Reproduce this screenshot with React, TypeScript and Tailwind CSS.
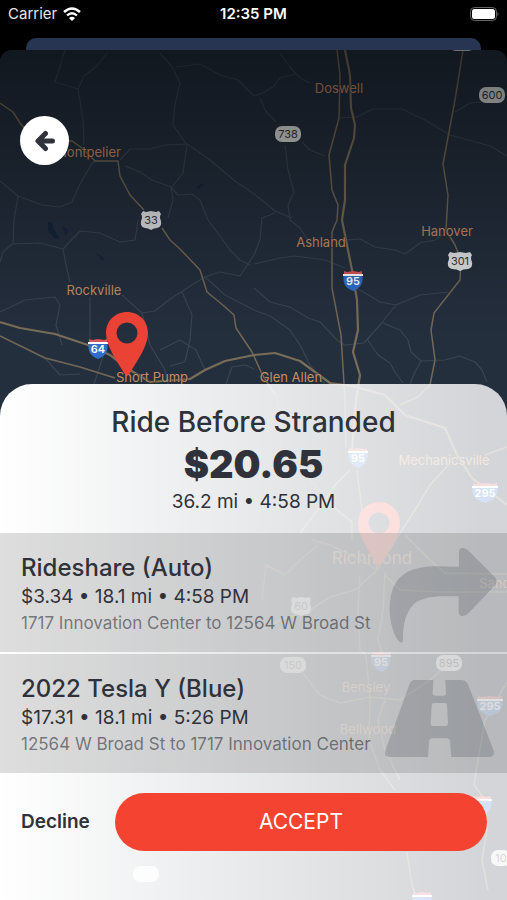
import React from "react";

const minorRoads = [
  "M65 50L55 82L78 89M107 53L97 66L84 76L78 89L83 120L84 145",
  "M160 53L172 67L180 83L175 105L173 125L187 145L183 173L171 188L173 200L168 218",
  "M176 67L200 64L220 75L238 80L254 96L263 93L274 86L280 78L295 74",
  "M0 181L18 196L42 205L60 207L72 202L80 184L92 163L97 161M18 196L14 220L13 244",
  "M120 160L130 149L150 149L165 145L187 144L210 160L235 181L254 194L275 211L292 218",
  "M125 166L140 172L152 180L171 187L178 195L192 194L200 200L208 220L217 232L230 250L240 260L250 265",
  "M280 53L290 67L300 78L310 83M285 145L288 170L294 192L288 205L290 220L300 228L308 240",
  "M302 142L310 150L325 156M260 98L265 110L276 122M262 218L275 213M262 218L260 240L254 255L240 276",
  "M340 118L357 117L373 109L402 109L425 120L450 135L490 146L507 156M455 112L470 103L482 102",
  "M254 264L280 258L295 256L325 260L345 268M345 240L360 239L375 247L395 250L405 254L420 243L435 240L447 232",
  "M254 288L270 302L290 307L308 318L320 322L338 341L345 345L364 343L380 325L396 305L380 302L370 296L355 287",
  "M396 305L420 295L448 292M383 323L400 330L408 340L411 352L421 361L445 360L460 356L475 362L482 370L487 382",
  "M367 339L378 355L390 363L395 372L403 383M421 361L415 372L410 384M254 310L270 316L290 330L300 345L310 365L325 384",
  "M0 262L3 252L12 244L40 243L63 249L80 231L100 233L120 242L135 240L138 220M63 249L66 265L70 282",
  "M0 312L25 300L55 297L60 305L56 325L62 345M90 297L90 345M105 350L98 372L92 390",
  "M122 295L142 313L155 311L170 299L195 283L205 277L220 272L240 276M205 277L225 295L254 310",
  "M142 313L150 345L165 370L168 384M182 292L192 315L190 340L185 362L170 366M160 350L180 340L196 350L205 370",
  "M45 358L60 375L80 374M226 384L232 367L245 365L254 369M277 395L282 450L310 480L330 500",
];

const highways = [
  "M0 103L13 112L20 123L34 140L72 141L82 148L95 161L118 161L120 176L130 195L144 210",
  "M162 228L170 240L181 250L200 270L207 292L224 306L234 315L236 328L252 352L262 374L275 395",
  "M337 50L340 75L339 118L329 155L332 190L338 205L337 220L332 232L332 288L341 335L345 400L346 448",
  "M463 50L455 100L443 164L448 195L446 230L455 245L461 260L460 280L434 313L431 330L435 360L430 385L418 397L400 405",
  "M0 336L45 358L80 367L115 378",
  "M357 470L362 510L377 568M350 470L335 485L325 500L352 522L352 540M325 500L300 533",
  "M450 463L430 485L415 510L400 533L377 570M485 455L507 447",
  "M312 540L330 545L365 562L377 570L355 590L330 597L310 610L280 620L262 630M262 600L266 565L285 575L300 560L318 545",
  "M360 575L358 610L360 650L366 655L370 700L369 740L380 770L395 790",
  "M385 572L383 610L378 640L382 652M385 575L400 590L440 592L507 592M405 535L430 560L445 573L507 574",
  "M303 673L320 695L340 703L370 697L400 700L430 680L445 667M385 700L378 720L385 750L400 780",
  "M507 682L485 720L478 760L474 785L485 800L487 830L482 860L488 890M407 852L411 880L416 900",
];

const interstates = [
  "M345 50L350 75L351 108L355 125L354 138L345 165L345 200L342 220L346 240L352 270L357 300L358 330L353 352L360 375L356 400L352 450",
  "M0 322L20 328L55 334L88 345L110 355L130 370L150 382L190 379L205 370L225 361L254 355L275 353L300 361L330 383L352 386L385 395L405 415L445 428L457 455L472 478L507 505",
];

const places = [
  { name: "Doswell", x: 339, y: 93, size: 13 },
  { name: "Montpelier", x: 88, y: 157, size: 13 },
  { name: "Hanover", x: 447, y: 236, size: 13 },
  { name: "Ashland", x: 321, y: 247, size: 13 },
  { name: "Rockville", x: 94, y: 295, size: 13 },
  { name: "Short Pump", x: 152, y: 382, size: 13 },
  { name: "Glen Allen", x: 291, y: 382, size: 13 },
  { name: "Mechanicsville", x: 444, y: 465, size: 13 },
  { name: "Richmond", x: 372, y: 564, size: 17 },
  { name: "Sandston", x: 508, y: 588, size: 13 },
  { name: "Bensley", x: 366, y: 692, size: 13 },
  { name: "Bellwood", x: 368, y: 734, size: 13 },
];

const routes = [
  { kind: "state", label: "", x: 462, y: 43 },
  { kind: "state", label: "600", x: 492, y: 95 },
  { kind: "state", label: "738", x: 288, y: 134 },
  { kind: "us", label: "33", x: 151, y: 220 },
  { kind: "us", label: "301", x: 460, y: 261 },
  { kind: "interstate", label: "95", x: 353, y: 280 },
  { kind: "interstate", label: "64", x: 98, y: 348 },
  { kind: "interstate", label: "95", x: 358, y: 457 },
  { kind: "interstate", label: "295", x: 485, y: 492 },
  { kind: "us", label: "60", x: 301, y: 606 },
  { kind: "state", label: "150", x: 293, y: 665 },
  { kind: "interstate", label: "95", x: 381, y: 661 },
  { kind: "state", label: "895", x: 449, y: 663 },
  { kind: "interstate", label: "295", x: 490, y: 705 },
  { kind: "interstate", label: "", x: 482, y: 805 },
  { kind: "state", label: "10", x: 501, y: 858 },
  { kind: "state", label: "", x: 146, y: 874 },
  { kind: "interstate", label: "", x: 422, y: 901 },
];

const rides = [
  {
    title: "Rideshare (Auto)",
    details: "$3.34 • 18.1 mi • 4:58 PM",
    route: "1717 Innovation Center to 12564 W Broad St",
    icon: <TurnIcon />,
  },
  {
    title: "2022 Tesla Y (Blue)",
    details: "$17.31 • 18.1 mi • 5:26 PM",
    route: "12564 W Broad St to 1717 Innovation Center",
    icon: <RoadIcon />,
  },
];

function RouteShield({ kind, label, x, y }: any) {
  const wide = label.length > 2;
  const textProps = {
    textAnchor: "middle" as const,
    y: 4,
    fontSize: 11,
    fill: "#33363b",
  };

  if (kind === "interstate") {
    const w = wide ? 12 : 9;
    return (
      <g transform={`translate(${x} ${y})`}>
        <path
          d={`M${-w} -6C${-w - 2} 2 ${-w + 1} 8 0 11C${w - 1} 8 ${w + 2} 2 ${w} -6Z`}
          fill="#2f6fc9"
        />
        <path d={`M${-w} -4V-9L${-w + 3} -8L0 -9L${w - 3} -8L${w} -9V-4Z`} fill="#d9545a" />
        <path d={`M${-w - 1} -6H${w + 1}V-4H${-w - 1}Z`} fill="#fff" />
        <text {...textProps} y={5} fill="#fff" fontWeight={600}>
          {label}
        </text>
      </g>
    );
  }

  if (kind === "us") {
    const w = wide ? 12 : 10;
    return (
      <g transform={`translate(${x} ${y})`}>
        <path
          d={`M${-w + 2} -9L${-w / 2} -8L0 -9L${w / 2} -8L${w - 2} -9L${w} -6Q${w - 2} -3 ${w} 1Q${w + 1} 7 ${w - 4} 8Q3 8 0 10Q-3 8 ${-w + 4} 8Q${-w - 1} 7 ${-w} 1Q${-w + 2} -3 ${-w} -6Z`}
          fill="#e4e5e6"
        />
        <text {...textProps}>{label}</text>
      </g>
    );
  }

  const half = label.length === 2 ? 10 : 13;
  return (
    <g transform={`translate(${x} ${y})`}>
      <rect x={-half} y={-8} width={half * 2} height={16} rx={7} fill="#dcdddd" />
      <text {...textProps}>{label}</text>
    </g>
  );
}

function MapPin({ x, y }: any) {
  return (
    <path
      transform={`translate(${x} ${y})`}
      d="M0 -21C12 -21 21 -12 21 0C21 13 10 28 3 40Q0 45 -3 40C-10 28 -21 13 -21 0C-21 -12 -12 -21 0 -21ZM0 -10.5A10.5 10.5 0 1 0 0 10.5A10.5 10.5 0 1 0 0 -10.5Z"
      fill="#ea4335"
      fillRule="evenodd"
    />
  );
}

function RouteMap() {
  return (
    <svg
      className="absolute inset-0 h-full w-full bg-[#242f3e]"
      viewBox="0 50 507 850"
      preserveAspectRatio="xMidYMid slice"
      fontFamily="Inter, sans-serif"
      role="img"
      aria-label="Route map"
    >
      <defs>
        <linearGradient id="shade" x1="0" y1="0" x2="0" y2="1">
          <stop offset="0" stopColor="#000" stopOpacity="0.5" />
          <stop offset="1" stopColor="#000" stopOpacity="0" />
        </linearGradient>
      </defs>
      <path
        d="M48 222l4 0 2 8 6 8 -5 1 -7-8zM96 253l8 5 -2 3zM62 226l6 4 -2 6zM196 188l7-5 1 2 -7 4z"
        fill="#17263c"
      />
      <g fill="none" strokeLinejoin="round">
        <path d={minorRoads.join("")} stroke="#3a4552" strokeWidth="1.2" />
        <path d={highways.join("")} stroke="#746855" strokeWidth="1.5" />
        <path d={interstates.join("")} stroke="#7a6d57" strokeWidth="2.2" />
      </g>
      {places.map((p) => (
        <text
          key={p.name}
          x={p.x}
          y={p.y}
          fontSize={p.size}
          textAnchor="middle"
          fill="#c98d62"
          stroke="#242f3e"
          strokeWidth="1"
          paintOrder="stroke"
        >
          {p.name}
        </text>
      ))}
      {routes.map((r, i) => (
        <RouteShield key={i} {...r} />
      ))}
      <rect y="50" width="507" height="290" fill="url(#shade)" />
      <MapPin x={127} y={333} />
      <MapPin x={379} y={523} />
    </svg>
  );
}

function TurnIcon() {
  return (
    <svg className="h-[100px] w-28 shrink-0" viewBox="393 39 336 300" fill="currentColor">
      <path d="M615 64Q616 53 628 54Q636 55 642 61L724 143Q733 154 724 165L643 250Q636 258 626 258Q614 257 614 245V199H572C530 199 490 205 470 233C450 262 447 295 447 330Q446 341 437 336C420 322 407 275 407 238C407 180 425 145 460 126Q490 109 550 109L615 110Z" />
    </svg>
  );
}

function RoadIcon() {
  return (
    <svg className="h-[100px] w-28 shrink-0" viewBox="393 39 336 300" fill="currentColor">
      <path
        fillRule="evenodd"
        d="M482 87H538L536 125Q536 134 545 134H567Q577 134 576 125L574 87H624Q636 88 642 100L718 296Q724 313 710 318H592L588 272Q587 262 577 262H536Q526 262 525 272L522 318H404Q388 315 395 296L467 98Q472 87 482 87ZM540 156H572Q579 156 579 163L582 215Q582 225 573 225H538Q530 225 530 215L533 163Q533 156 540 156Z"
      />
    </svg>
  );
}

function StatusBar() {
  return (
    <div className="grid h-[38px] grid-cols-3 items-center px-2 pb-2.5 text-[15px] leading-5 text-white">
      <div className="flex items-center gap-1.5 text-gray-200">
        <span>Carrier</span>
        <svg width="18" height="14" viewBox="0 0 18 14" fill="none" stroke="#fff">
          <path d="M1 5Q9 -2 17 5" strokeWidth="2.5" />
          <path d="M4 8.5Q9 4 14 8.5" strokeWidth="2.3" />
          <path d="M9 14L6 11Q9 8.5 12 11Z" fill="#fff" stroke="none" />
        </svg>
      </div>
      <span className="text-center font-semibold">12:35 PM</span>
      <svg className="justify-self-end" width="30" height="15" viewBox="0 0 30 15">
        <rect x="1.5" y="0.5" width="26" height="13" rx="4" fill="none" stroke="#666" />
        <rect x="3" y="2" width="23" height="10" rx="2.5" fill="#fff" />
        <path d="M28.500 5Q30.500 7 28.500 9Z" fill="#666" />
      </svg>
    </div>
  );
}

function App() {
  return (
    <div className="flex min-h-screen flex-col bg-black font-['Inter',sans-serif] text-[#2f323a]">
      <StatusBar />
      <div className="mx-[26px] h-3 rounded-t-[10px] bg-[#273553]"></div>
      <main className="relative flex flex-1 flex-col justify-between overflow-hidden rounded-t-xl">
        <RouteMap />
        <button
          aria-label="Back"
          className="relative mt-[66px] ml-5 flex h-[49px] w-[49px] items-center justify-center rounded-full bg-white"
        >
          <svg width="22" height="22" viewBox="0 0 22 22" fill="none" stroke="currentColor">
            <path
              d="M11.5 3.5L4 11L11.5 18.5M5 11H18.5"
              strokeWidth="5"
              strokeLinecap="round"
              strokeLinejoin="round"
            />
          </svg>
        </button>

        <section className="relative mt-10 overflow-hidden rounded-t-[32px] bg-gradient-to-r from-white to-white/80 to-95%">
          <div className="pt-5 pb-[17px] text-center">
            <h1 className="text-[28px] leading-9 font-medium">Ride Before Stranded</h1>
            <p className="text-[38px] leading-[48px] font-black">$20.65</p>
            <p className="text-[19px] leading-7">36.2 mi • 4:58 PM</p>
          </div>
          <ul className="flex flex-col gap-0.5">
            {rides.map((ride) => (
              <li
                key={ride.title}
                className="flex items-center justify-between bg-black/13 pr-2.5 pl-[21px]"
              >
                <div className="min-w-0 pt-5 pb-[17px] whitespace-nowrap">
                  <h2 className="text-2xl leading-[30px] font-medium">{ride.title}</h2>
                  <p className="text-[19px] leading-7">{ride.details}</p>
                  <p className="text-[17px] leading-6 text-[#2f323a]/60">{ride.route}</p>
                </div>
                <div className="text-[#2f323a]/20">{ride.icon}</div>
              </li>
            ))}
          </ul>
          <div className="flex items-center gap-[25px] pt-5 pr-5 pb-[49px] pl-[21px]">
            <button className="text-[19px] leading-6 font-semibold">Decline</button>
            <button className="h-[58px] flex-1 rounded-full bg-[#f44330] text-[21px] leading-7 text-white">
              ACCEPT
            </button>
          </div>
        </section>
      </main>
    </div>
  );
}

export default App;
